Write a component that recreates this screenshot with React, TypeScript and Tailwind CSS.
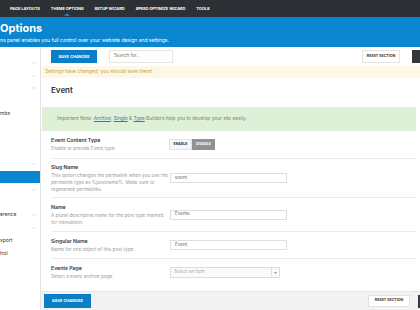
import React from "react";

const navItems = ["PAGE LAYOUTS", "THEME OPTIONS", "SETUP WIZARD", "SPEED OPTIMIZE WIZARD", "TOOLS"];

// visible parts of the side menu (the rest is cut off on the left)
const sideItems: { text: string; chevron?: boolean; active?: boolean }[] = [
  { text: "", chevron: true },
  { text: "", chevron: true },
  { text: "", chevron: true },
  { text: "" },
  { text: "mbs" },
  { text: "" },
  { text: "" },
  { text: "" },
  { text: "", chevron: true },
  { text: "", active: true },
  { text: "", chevron: true },
  { text: "" },
  { text: "erence", chevron: true },
  { text: "", chevron: true },
  { text: "xport" },
  { text: "trol" },
  { text: "" },
  { text: "" },
  { text: "" },
  { text: "" },
];

function Chevron() {
  return (
    <svg width="4" height="3" viewBox="0 0 4 3" className="absolute right-[4px] top-1/2 -translate-y-1/2">
      <path d="M0.5 0.7 L2 2.2 L3.5 0.7" fill="none" stroke="#b9bcc0" strokeWidth="0.6" />
    </svg>
  );
}

function Row({ title, desc, height, children }: { title: string; desc: string[]; height: string; children: React.ReactNode }) {
  return (
    <div className={`flex items-center border-b border-[#ececec] ${height}`}>
      <div className="w-[119px] shrink-0">
        <div className="text-[5.2px] font-semibold text-[#333] leading-[7px]">{title}</div>
        <div className="mt-[1px] text-[4.7px] text-[#9a9a9a] leading-[7px]">
          {desc.map((d) => (
            <div key={d} className="whitespace-nowrap">{d}</div>
          ))}
        </div>
      </div>
      <div>{children}</div>
    </div>
  );
}

function TextField({ value }: { value: string }) {
  return (
    <div className="w-[117px] h-[10px] border border-[#dedede] bg-white flex items-center px-[4px] text-[4.6px] text-[#666]">
      {value}
    </div>
  );
}

export default function App() {
  return (
    <div className="w-[420px] h-[310px] overflow-hidden bg-white font-['Inter','Noto_Sans',sans-serif]">
      {/* top admin nav */}
      <nav className="h-[17px] bg-[#2d3136] flex items-center pl-[10px] gap-[11px] text-[4px] font-bold text-white tracking-[-0.05px]">
        {navItems.map((n) => (
          <span key={n} className="relative whitespace-nowrap">
            {n}
            {n === "THEME OPTIONS" && (
              <span className="absolute left-1/2 -translate-x-1/2 top-[7.5px] w-0 h-0 border-l-[3px] border-r-[3px] border-b-[3px] border-l-transparent border-r-transparent border-b-[#0a85cf]" />
            )}
          </span>
        ))}
      </nav>

      {/* blue header */}
      <header className="h-[30px] bg-[#0a85cf] text-white pt-[5px]">
        <div className="text-[11px] font-bold leading-[12px]">Options</div>
        <div className="text-[5px] leading-[6px] mt-[3px] whitespace-nowrap">
          ns panel enables you full control over your website design and settings.
        </div>
      </header>

      <div className="flex h-[263px]">
        {/* side menu */}
        <aside className="w-[41px] shrink-0 border-r border-[#e3e3e3] pt-[9.6px] bg-white">
          {sideItems.map((it, i) => (
            <div
              key={i}
              className={`relative h-[12.7px] flex items-center text-[5px] text-[#333] whitespace-nowrap ${
                it.active ? "bg-[#0a85cf]" : ""
              }`}
            >
              {it.text}
              {it.chevron && <Chevron />}
            </div>
          ))}
        </aside>

        <main className="flex-1 flex flex-col min-w-0">
          {/* toolbar */}
          <div className="h-[19px] flex items-center pl-[10px] bg-white">
            <button className="w-[46px] h-[13px] bg-[#0a7fc6] text-white text-[3.9px] font-bold">SAVE CHANGES</button>
            <div className="ml-[12px] w-[64px] h-[13px] border border-[#e6e6e6] flex items-center px-[4px] text-[4.6px] text-[#777]">
              Search for...
            </div>
            <div className="flex-1" />
            <button className="w-[38px] h-[13px] border border-[#e3e3e3] bg-white text-[3.6px] font-bold text-[#333]">
              RESET SECTION
            </button>
            <div className="ml-[12px] w-[8px] h-[13px] bg-[#33373c]" />
          </div>

          {/* notice */}
          <div className="h-[12px] bg-[#fdf7e6] flex items-center pl-[4px] text-[4.9px] text-[#c9a24d]">
            Settings have changed, you should save them!
          </div>

          {/* section */}
          <div className="flex-1 pl-[10px] pr-[4px]">
            <h2 className="mt-[7px] h-[10px] text-[8px] font-semibold leading-[10px] text-[#333]">Event</h2>
            <div className="mt-[12px] -ml-[9px] h-[24px] bg-[#dff0d8] flex items-center pl-[15px] text-[4.8px] text-[#6e8c5d] whitespace-nowrap">
              <span>
                Important Note: <span className="underline text-[#3674b3]">Archive</span>,{" "}
                <span className="underline text-[#3674b3]">Single</span> &amp;{" "}
                <span className="underline text-[#3674b3]">Type</span> Builders help you to develop your site easily.
              </span>
            </div>

            <Row title="Event Content Type" desc={["Enable to provide Event type."]} height="h-[28px]">
              <div className="flex h-[11px] -ml-[1px]">
                <span className="w-[23px] border border-[#e2e2e2] bg-[#f7f7f7] flex items-center justify-center text-[3.5px] font-bold text-[#333]">
                  ENABLE
                </span>
                <span className="w-[23px] bg-[#929292] flex items-center justify-center text-[3.5px] font-bold text-white">
                  DISABLE
                </span>
              </div>
            </Row>

            <Row
              title="Slug Name"
              desc={[
                "This option changes the permalink when you use the",
                "permalink type as %postname%. Make sure to",
                "regenerate permalinks.",
              ]}
              height="h-[39px]"
            >
              <TextField value="event" />
            </Row>

            <Row
              title="Name"
              desc={["A plural descriptive name for the post type marked", "for translation."]}
              height="h-[34px]"
            >
              <TextField value="Events" />
            </Row>

            <Row title="Singular Name" desc={["Name for one object of this post type."]} height="h-[27px]">
              <TextField value="Event" />
            </Row>

            <div className="flex items-center h-[27px]">
              <div className="w-[119px] shrink-0">
                <div className="text-[5.2px] font-semibold text-[#333] leading-[7px]">Events Page</div>
                <div className="mt-[1px] text-[4.7px] text-[#9a9a9a] leading-[7px]">Select a event archive page.</div>
              </div>
              <div className="w-[110px] h-[11px] border border-[#dcdcdc] bg-[#fafafa] flex items-center pl-[3px] text-[4.6px] text-[#aaa]">
                <span className="flex-1">Select an Item</span>
                <span className="w-[8px] h-full border-l border-[#e2e2e2] flex items-center justify-center">
                  <svg width="3" height="2" viewBox="0 0 3 2">
                    <path d="M0 0 L3 0 L1.5 2 Z" fill="#999" />
                  </svg>
                </span>
              </div>
            </div>
          </div>

          {/* footer */}
          <div className="h-[19px] bg-[#f2f2f2] border-t border-[#e6e6e6] flex items-center pl-[3px]">
            <button className="w-[47px] h-[14px] bg-[#0a7fc6] text-white text-[3.9px] font-bold">SAVE CHANGES</button>
            <div className="flex-1" />
            <button className="w-[42px] h-[12px] border border-[#e3e3e3] bg-white text-[3.6px] font-bold text-[#333]">
              RESET SECTION
            </button>
            <div className="ml-[8px] w-[2px] h-[13px] bg-[#33373c]" />
          </div>
        </main>
      </div>
    </div>
  );
}
